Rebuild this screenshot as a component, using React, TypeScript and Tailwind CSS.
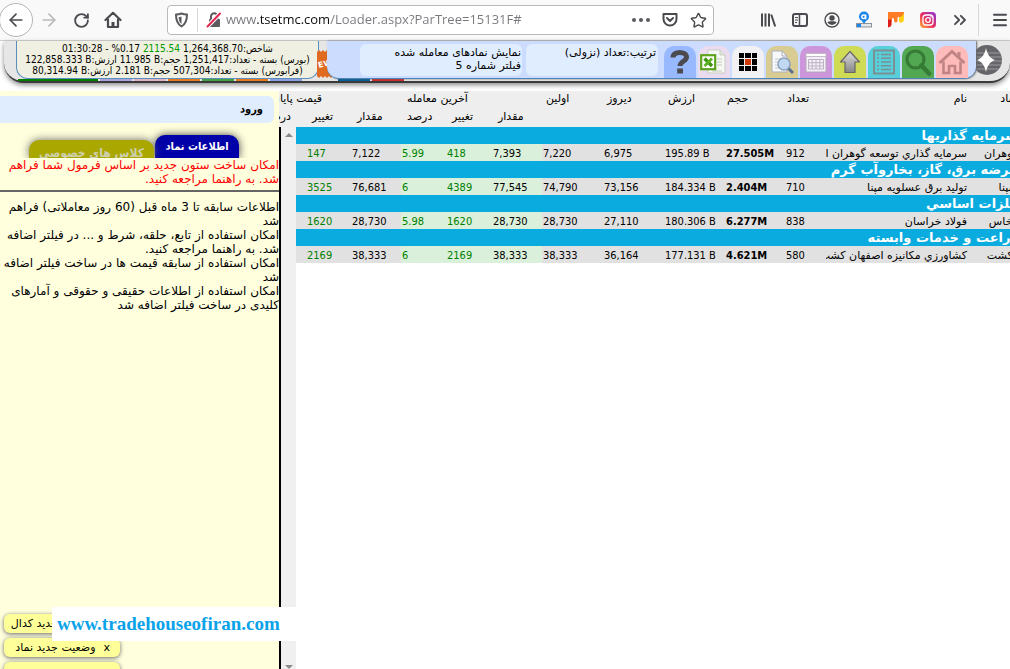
import type { ReactNode } from "react";
import { clsx } from "clsx";
import { ArrowLeft, ArrowRight, ChevronsRight, Menu, RotateCw, Star } from "lucide-react";

type Row = {
  sector: string;
  symbol: string;
  name: string;
  count: string;
  volume: string;
  value: string;
  yesterday: string;
  first: string;
  last: string;
  lastChange: string;
  lastPercent: string;
  close: string;
  closeChange: string;
};

const ROWS: Row[] = [
  {
    sector: "سرمايه گذاريها",
    symbol: "گوهران",
    name: "سرمايه گذاري توسعه گوهران اميد",
    count: "912",
    volume: "27.505M",
    value: "195.89 B",
    yesterday: "6,975",
    first: "7,220",
    last: "7,393",
    lastChange: "418",
    lastPercent: "5.99",
    close: "7,122",
    closeChange: "147",
  },
  {
    sector: "عرضه برق، گاز، بخاروآب گرم",
    symbol: "بمپنا",
    name: "توليد برق عسلويه مپنا",
    count: "710",
    volume: "2.404M",
    value: "184.334 B",
    yesterday: "73,156",
    first: "74,790",
    last: "77,545",
    lastChange: "4389",
    lastPercent: "6",
    close: "76,681",
    closeChange: "3525",
  },
  {
    sector: "فلزات اساسي",
    symbol: "فخاس",
    name: "فولاد خراسان",
    count: "838",
    volume: "6.277M",
    value: "180.306 B",
    yesterday: "27,110",
    first: "28,730",
    last: "28,730",
    lastChange: "1620",
    lastPercent: "5.98",
    close: "28,730",
    closeChange: "1620",
  },
  {
    sector: "زراعت و خدمات وابسته",
    symbol: "زكشت",
    name: "كشاورزي مكانيزه اصفهان كشت",
    count: "580",
    volume: "4.621M",
    value: "177.131 B",
    yesterday: "36,164",
    first: "38,333",
    last: "38,333",
    lastChange: "2169",
    lastPercent: "6",
    close: "38,333",
    closeChange: "2169",
  },
];

const NEWS = [
  "اطلاعات سابقه تا 3 ماه قبل (60 روز معاملاتی) فراهم شد",
  "امکان استفاده از تابع، حلقه، شرط و ... در فیلتر اضافه شد. به راهنما مراجعه کنید.",
  "امکان استفاده از سابقه قیمت ها در ساخت فیلتر اضافه شد",
  "امکان استفاده از اطلاعات حقیقی و حقوقی و آمارهای کلیدی در ساخت فیلتر اضافه شد",
];

export default function App() {
  return (
    <div className="flex h-screen flex-col overflow-hidden bg-white font-['DejaVu_Sans',sans-serif] text-[11px] text-black">
      <BrowserBar />
      <SiteHeader />
      <div className="mt-2 flex min-h-0 flex-1">
        <Sidebar />
        <Market />
      </div>
    </div>
  );
}

function BrowserBar() {
  return (
    <header className="flex h-[41px] shrink-0 items-center border-b border-[#cfcfcf] bg-[#f9f9fa] text-[#4a4a4f]">
      <nav className="-ml-px flex items-center gap-2">
        <button aria-label="Back" className="flex size-[34px] items-center justify-center rounded-full border border-[#b5b5b7] bg-white">
          <ArrowLeft size={20} />
        </button>
        <button aria-label="Forward" className="-ml-0.5 flex w-5 justify-center text-[#b9b9bb]">
          <ArrowRight size={20} />
        </button>
        <button aria-label="Reload" className="ml-1 flex w-5 justify-center">
          <RotateCw size={17} strokeWidth={2.6} />
        </button>
        <button aria-label="Home" className="ml-1 flex w-5 justify-center">
          <HomeIcon />
        </button>
      </nav>
      <div className="ml-11 flex h-[30px] min-w-0 flex-1 items-center rounded-sm border border-[#b9b9bb] bg-white pr-1.5 pl-1.5">
        <ShieldIcon />
        <span className="mx-2 h-6 w-px bg-[#d7d7db]" />
        <LockOffIcon />
        <input
          aria-label="Address"
          defaultValue="www.tsetmc.com/Loader.aspx?ParTree=15131F#"
          className="ml-1 min-w-0 flex-1 bg-[linear-gradient(90deg,#77777c_31px,#0c0c0d_31px,#0c0c0d_104px,#77777c_104px)] bg-clip-text font-['Open_Sans',sans-serif] text-[13px] text-transparent outline-none"
        />
        <div className="flex items-center gap-3">
          <button aria-label="Page actions" className="flex gap-[3px]">
            <span className="size-1 rounded-full bg-[#5a5a5f]" />
            <span className="size-1 rounded-full bg-[#5a5a5f]" />
            <span className="size-1 rounded-full bg-[#5a5a5f]" />
          </button>
          <button aria-label="Save to Pocket">
            <PocketIcon />
          </button>
          <button aria-label="Bookmark">
            <Star size={17} />
          </button>
        </div>
      </div>
      <div className="ml-[46px] flex items-center gap-4">
        <button aria-label="Library">
          <LibraryIcon />
        </button>
        <button aria-label="Sidebars">
          <SidebarIcon />
        </button>
        <button aria-label="Account">
          <AccountIcon />
        </button>
        <button aria-label="Alexa">
          <AlexaIcon />
        </button>
        <button aria-label="Mail">
          <MetaIcon />
        </button>
        <button aria-label="Instagram">
          <InstagramIcon />
        </button>
        <button aria-label="More tools">
          <ChevronsRight size={20} strokeWidth={2.2} className="-mx-0.5" />
        </button>
      </div>
      <span className="ml-2.5 h-8 w-px bg-[#d7d7db]" />
      <button aria-label="Menu" className="mr-px ml-3">
        <Menu size={18} strokeWidth={2.6} />
      </button>
    </header>
  );
}

function SiteHeader() {
  return (
    <div className="ml-1 flex shrink-0 flex-col rounded-b-[20px] border-b-2 border-[#3a3a3a] bg-[#e6e6e6] shadow-[0_2px_5px_#888]">
      <div className="flex h-[38px]">
        <div
          dir="rtl"
          className="ml-3 w-[303px] shrink-0 rounded-b-xl border-x border-b border-[#5b8dbd] bg-[#f0f0e2] pt-0.5 text-center font-['DejaVu_Sans_Condensed','DejaVu_Sans',sans-serif] text-[10px] leading-[11px] whitespace-nowrap"
        >
          <p>
            شاخص:<bdi dir="ltr">1,264,368.70</bdi> <bdi dir="ltr" className="text-[#009900]">2115.54</bdi>{" "}
            <bdi dir="ltr">%0.17</bdi> - <bdi dir="ltr">01:30:28</bdi>
          </p>
          <IndexLine market="بورس" count="1,251,417" volume="11.985 B" value="122,858.333 B" />
          <IndexLine market="فرابورس" count="507,304" volume="2.181 B" value="80,314.94 B" />
        </div>
        <span className="-mr-2 -ml-1 flex w-5 shrink-0 items-center justify-center pt-2">
          <NewBadge />
        </span>
        <div className="relative flex min-w-0 flex-1 rounded-b-xl border-b border-[#4f84b8] bg-[#ccdcff] shadow-[1px_0_2px_#666]">
          <div dir="rtl" className="flex w-full">
            <nav className="mr-0.5 flex w-[312px] shrink-0 items-end justify-end gap-0.5 pr-1.5" dir="ltr">
              <Tile label="Help" tone="bg-[#99b9ff]"><HelpGlyph /></Tile>
              <Tile label="Excel" tone="bg-[#eadcee]"><ExcelGlyph /></Tile>
              <Tile label="Grid" tone="bg-[#f1f1f4]"><GridGlyph /></Tile>
              <Tile label="Inspect" tone="bg-[#d8cc92]"><InspectGlyph /></Tile>
              <Tile label="Calendar" tone="bg-[#cd95da]"><CalendarGlyph /></Tile>
              <Tile label="Upload" tone="bg-[#cfda55]"><UpGlyph /></Tile>
              <Tile label="List" tone="bg-[#57d0d9]"><ListGlyph /></Tile>
              <Tile label="Search" tone="bg-[#52a852]"><SearchGlyph /></Tile>
              <Tile label="Home" tone="bg-[#ffbaba]"><HouseGlyph /></Tile>
            </nav>
            <p className="mt-[3px] mr-1 h-8 w-[132px] shrink-0 rounded-md bg-[#e0edff] px-0.5 pt-0.5 leading-[13px]">
              ترتیب:تعداد (نزولی)
            </p>
            <p className="mt-[3px] mr-1 h-8 w-[162px] shrink-0 rounded-md bg-[#e0edff] px-px pt-0.5 leading-[13px]">
              نمایش نمادهای معامله شده
              <br />
              فیلتر شماره 5
            </p>
          </div>
        </div>
        <span className="-ml-2 flex w-[42px] shrink-0 items-start pt-0.5">
          <LogoGlyph />
        </span>
      </div>
      <div className="flex h-0.5 gap-0.5 px-[14px]">
        <span className="w-20 bg-[#008000]" />
        <span className="w-8 bg-[#a9a4dd]" />
        <span className="w-8 bg-[#e0b4c4]" />
        <span className="w-8 bg-[#e87a1c]" />
        <span className="w-8 bg-[#45a045]" />
        <span className="w-8 bg-[#e87a1c]" />
        <span className="w-8 bg-[#8a9fe0]" />
        <span className="w-8" />
        <span className="w-8 bg-[#005f9c]" />
        <span className="w-8 bg-[#d42a2a]" />
      </div>
    </div>
  );
}

function IndexLine({ market, count, volume, value }: { market: string; count: string; volume: string; value: string }) {
  return (
    <p>
      ({market}) بسته - تعداد:<bdi dir="ltr">{count}</bdi> حجم:<bdi dir="ltr">{volume}</bdi> ارزش:<bdi dir="ltr">{value}</bdi>
    </p>
  );
}

function Tile({ label, tone, children }: { label: string; tone: string; children: ReactNode }) {
  return (
    <button aria-label={label} className={clsx("flex size-8 shrink-0 items-center justify-center rounded-t-[10px]", tone)}>
      {children}
    </button>
  );
}

function Sidebar() {
  return (
    <aside dir="rtl" className="relative flex w-[279px] shrink-0 flex-col overflow-hidden bg-[#ffffdd]">
      <a
        href="#login"
        className="mt-[5px] mr-[5px] rounded-r-md bg-[#e0edff] pr-[11px] font-['DejaVu_Sans_Condensed','DejaVu_Sans',sans-serif] leading-[27px] font-bold"
      >
        ورود
      </a>
      <div className="flex h-[35px] items-end overflow-hidden pr-10">
        <button className="h-[23px] w-[84px] shrink-0 rounded-t-[10px] bg-[#0000a8] pt-0.5 font-['DejaVu_Sans_Condensed','DejaVu_Sans',sans-serif] font-bold whitespace-nowrap text-white shadow-[0_0_8px_#444]">
          اطلاعات نماد
        </button>
        <button className="mr-px h-[18px] w-[125px] shrink-0 rounded-t-[10px] bg-[#aaa800] pt-1 font-['DejaVu_Sans_Condensed','DejaVu_Sans',sans-serif] text-[12px] leading-[18px] font-bold whitespace-nowrap text-[#cfcfb0] shadow-[0_0_8px_#666]">
          کلاس های خصوصی
        </button>
      </div>
      <p className="border-b-2 border-[#666] pb-1 text-[12px] leading-[14px] text-[#ff0000]">
        امکان ساخت ستون جدید بر اساس فرمول شما فراهم شد. به راهنما مراجعه کنید.
      </p>
      <ul className="mt-2 text-[12px] leading-[14px]">
        {NEWS.map((item) => (
          <li key={item}>{item}</li>
        ))}
      </ul>
      <div className="absolute top-[523px] left-1 flex w-[116px] flex-col gap-[5px]">
        <Toast text="اطلاعیه جدید کدال" />
        <Toast text="وضعیت جدید نماد" />
        <Toast text="وضعیت جدید نماد" tall />
      </div>
    </aside>
  );
}

function Toast({ text, tall }: { text: string; tall?: boolean }) {
  return (
    <div
      className={clsx(
        "flex shrink-0 items-center gap-2 rounded-md bg-[#ffff99] pt-0.5 pr-2.5 whitespace-nowrap shadow-[0_1px_4px_#666]",
        tall ? "h-9" : "h-[19px]",
      )}
    >
      <button aria-label="بستن">x</button>
      <span>{text}</span>
    </div>
  );
}

// Widths run right to left; the last column takes what is left of the window.
function Columns() {
  return (
    <colgroup>
      <col className="w-[57px]" />
      <col className="w-[143px]" />
      <col className="w-[41px]" />
      <col className="w-[60px]" />
      <col className="w-[61px]" />
      <col className="w-[61px]" />
      <col className="w-[61px]" />
      <col className="w-[50px]" />
      <col className="w-[46px]" />
      <col className="w-[45px]" />
      <col className="w-[50px]" />
      <col className="w-[45px]" />
      <col />
    </colgroup>
  );
}

function Market() {
  return (
    <main className="relative flex min-w-0 flex-1 flex-col">
      <div className="overflow-hidden bg-[#eee]">
        <div dir="rtl" className="-mr-4">
          <table className="w-full table-fixed">
            <Columns />
            <thead className="text-left align-top leading-[16px] whitespace-nowrap [&_th]:font-normal">
              <tr className="h-[18px]">
                <th className="pr-2 text-right">نماد</th>
                <th className="pr-0.5 text-right">نام</th>
                <th className="pl-0.5">تعداد</th>
                <th className="pl-0.5">حجم</th>
                <th className="pl-1">ارزش</th>
                <th className="pl-1">دیروز</th>
                <th className="pl-1">اولین</th>
                <th colSpan={3} className="pl-1.5">آخرین معامله</th>
                <th colSpan={3} className="overflow-hidden pr-[79px] text-right">قیمت پایانی</th>
              </tr>
              <tr className="h-[18px]">
                <th colSpan={7} />
                <th className="pl-1.5">مقدار</th>
                <th className="pl-1.5">تغییر</th>
                <th className="pl-1.5">درصد</th>
                <th className="pl-1.5">مقدار</th>
                <th className="pl-1.5">تغییر</th>
                <th className="overflow-hidden pr-[15px] text-right">درصد</th>
              </tr>
            </thead>
          </table>
        </div>
      </div>
      <div className="flex min-h-0 flex-1">
        <div className="flex w-[17px] shrink-0 flex-col items-center justify-between border-l-2 border-black bg-[#f0f0f0] pt-1.5">
          <span className="border-x-4 border-b-4 border-x-transparent border-b-[#8a8a8a]" />
          <span className="border-x-4 border-t-4 border-x-transparent border-t-[#8a8a8a]" />
        </div>
        <div className="min-w-0 flex-1 overflow-hidden">
          <div dir="rtl" className="-mr-4">
            <table className="w-full table-fixed">
              <Columns />
              {ROWS.map((row) => (
                <MarketRows key={row.symbol} row={row} />
              ))}
            </table>
          </div>
        </div>
      </div>
      <p className="absolute top-[516px] -left-[227px] w-[244px] bg-white pl-[5px] font-['Liberation_Serif',serif] text-[19px] leading-[34px] font-bold text-[#0aa2e8]">
        www.tradehouseofiran.com
      </p>
    </main>
  );
}

function MarketRows({ row }: { row: Row }) {
  return (
    <tbody className="leading-[15px] whitespace-nowrap">
      <tr className="h-[17px] bg-[#0aabde]">
        <th colSpan={13} className="pr-2 text-right text-[13px] leading-[17px] font-bold text-white">
          {row.sector}
        </th>
      </tr>
      <tr className="h-[17px] bg-[#e1e1e1]">
        <td className="pt-0.5 pr-2">{row.symbol}</td>
        <td className="overflow-hidden pt-0.5 pr-0.5">{row.name}</td>
        <Num>{row.count}</Num>
        <Num className="font-bold">{row.volume}</Num>
        <Num>{row.value}</Num>
        <Num>{row.yesterday}</Num>
        <Num>{row.first}</Num>
        <Num className="bg-[#daf0da]">{row.last}</Num>
        <Num className="bg-[#daf0da] text-[#008000]">{row.lastChange}</Num>
        <Num className="bg-[#daf0da] text-[#008000]">{row.lastPercent}</Num>
        <Num>{row.close}</Num>
        <Num className="text-[#008000]">{row.closeChange}</Num>
        <td />
      </tr>
    </tbody>
  );
}

function Num({ className, children }: { className?: string; children: ReactNode }) {
  return (
    <td dir="ltr" className={clsx("pt-0.5 pl-px text-left font-['DejaVu_Sans_Condensed','DejaVu_Sans',sans-serif]", className)}>
      {children}
    </td>
  );
}

function HomeIcon() {
  return (
    <svg width="18" height="18" viewBox="0 0 18 18" fill="none" stroke="currentColor" strokeWidth="2.2" strokeLinejoin="round" strokeLinecap="round">
      <path d="M1.500 9 9 1.800 16.500 9M4 8.500V16h10V8.500" />
      <path d="M9 15.500V11" strokeWidth="3" strokeLinecap="butt" />
    </svg>
  );
}

function ShieldIcon() {
  return (
    <svg width="15" height="16" viewBox="0 0 15 16" fill="none" stroke="#5a5a5f">
      <path d="M7.500 1.500c2 .8 3.800 1 5.500 1 0 6-1 9.500-5.500 12C3 12 2 8.500 2 2.500c1.700 0 3.500-.2 5.500-1z" strokeWidth="2" strokeLinejoin="round" />
      <path d="M7.500 4.500v7.500C5.200 10.300 4.800 8 4.700 5c1 0 1.900-.1 2.800-.5z" fill="#5a5a5f" stroke="none" />
    </svg>
  );
}

function LockOffIcon() {
  return (
    <svg width="16" height="18" viewBox="0 0 16 18" fill="none">
      <path d="M5 8V5.500a3.200 3.200 0 0 1 6.400 0V8" stroke="#5a5a5f" strokeWidth="2" />
      <rect x="3" y="8" width="11" height="8" rx="1" fill="#5a5a5f" />
      <path d="M1.500 15.500 14 2.500" stroke="#fff" strokeWidth="4" />
      <path d="M1.500 15.500 14 2.500" stroke="#e22850" strokeWidth="2" strokeLinecap="round" />
    </svg>
  );
}

function PocketIcon() {
  return (
    <svg width="16" height="16" viewBox="0 0 16 16" fill="none" stroke="currentColor" strokeWidth="2" strokeLinecap="round" strokeLinejoin="round">
      <path d="M1.500 2h13v5a6.500 6.500 0 0 1-13 0z" />
      <path d="m5 6 3 3 3-3" />
    </svg>
  );
}

function LibraryIcon() {
  return (
    <svg width="16" height="16" viewBox="0 0 16 16" fill="none" stroke="currentColor" strokeWidth="2">
      <path d="M2 1.500v13M5.500 1.500v13M9 1.500v13M11.200 2.500l4 12" />
    </svg>
  );
}

function SidebarIcon() {
  return (
    <svg width="16" height="16" viewBox="0 0 16 16" fill="none" stroke="currentColor">
      <rect x="1" y="2" width="14" height="12" rx="2" strokeWidth="2" />
      <path d="M7.500 2v12" strokeWidth="1.500" />
      <path d="M3 5.500h3M3 8h3M3 10.500h2" />
    </svg>
  );
}

function AccountIcon() {
  return (
    <svg width="16" height="16" viewBox="0 0 16 16" fill="none">
      <circle cx="8" cy="8" r="7" stroke="currentColor" strokeWidth="1.400" />
      <circle cx="8" cy="6" r="2.700" fill="currentColor" />
      <path d="M3.300 10.300c1-.9 2.300-1 4.700-1s3.700.1 4.700 1A5.300 5.300 0 0 1 8 13a5.300 5.300 0 0 1-4.700-2.700z" fill="currentColor" />
    </svg>
  );
}

function AlexaIcon() {
  return (
    <svg width="16" height="18" viewBox="0 0 16 18">
      <circle cx="8" cy="5.500" r="5" fill="#1a84e8" />
      <circle cx="7.600" cy="5.800" r="1.800" fill="none" stroke="#fff" strokeWidth="1.400" />
      <path d="M9.700 3.500v4.800" stroke="#fff" strokeWidth="1.400" />
      <path d="m6 10 2 3 2-3z" fill="#1a84e8" />
      <rect x=".5" y="12.500" width="15" height="3.500" fill="#e4e6ea" stroke="#8c9098" />
      <rect x="1" y="13" width="4" height="3" fill="#1a84e8" />
    </svg>
  );
}

function MetaIcon() {
  return (
    <svg width="16" height="16" viewBox="0 0 16 16">
      <path d="M0 0h16v7H11.500V5.500q-1-1.500-2 0V9q-1.500 3-3.500 0V7Q5 5 3.800 7v3L0 12z" fill="#ff7c26" />
      <path d="M0 7.500h3.500V13q-.5 2-3.500 2.500z" fill="#dd1c1c" />
      <path d="M16 1v7.500Q14 12 11 10V5.500Q14 5 16 1z" fill="#ffd21c" />
    </svg>
  );
}

function InstagramIcon() {
  return (
    <svg width="16" height="16" viewBox="0 0 16 16" fill="none">
      <defs>
        <linearGradient id="insta" x1="0" y1="1" x2="1" y2="0">
          <stop offset="0" stopColor="#fdb53a" />
          <stop offset=".45" stopColor="#ec2f5b" />
          <stop offset="1" stopColor="#8a35d8" />
        </linearGradient>
      </defs>
      <rect width="16" height="16" rx="4" fill="url(#insta)" />
      <rect x="3" y="3" width="10" height="10" rx="3" stroke="#fff" strokeWidth="1.300" />
      <circle cx="8" cy="8" r="2.300" stroke="#fff" strokeWidth="1.300" />
      <circle cx="11" cy="5" r=".8" fill="#fff" />
    </svg>
  );
}

function NewBadge() {
  return (
    <svg width="20" height="28" viewBox="0 0 20 28">
      <path d="M2 2l2-2 2 2 2-2 2 2 2-2 2 2 2-2 2 2v24l-2 2-2-2-2 2-2-2-2 2-2-2-2 2-2-2z" fill="#e06a20" />
      <text x="3" y="17" fontSize="8" fontWeight="bold" fill="#fff" transform="rotate(-14 8 14)">EW</text>
    </svg>
  );
}

function HelpGlyph() {
  return (
    <svg width="22" height="26" viewBox="0 0 22 26" fill="none" stroke="#4b4b4f" strokeWidth="5">
      <path d="M4 8.500C4 1.500 17.500 2 17.500 8c0 4.500-6.500 4-6.500 9" />
      <path d="M8.200 22H14" strokeWidth="5" />
    </svg>
  );
}

function ExcelGlyph() {
  return (
    <svg width="28" height="26" viewBox="0 0 28 26" fill="none">
      <path d="M8 1h12l5 5v18H8z" fill="#f6f8f4" stroke="#c6ccc0" />
      <path d="M20 1v5h5" fill="#e0e6da" stroke="#c6ccc0" />
      <path d="M17 10h5M17 13h5M17 16h5M12 22h10" stroke="#c0c8bc" />
      <rect x="1.200" y="6.200" width="14" height="14" fill="#fff" stroke="#5fa21e" strokeWidth="2.200" />
      <path d="m4.500 9.500 7.500 7.500" stroke="#3f9410" strokeWidth="3.400" />
      <path d="m12 9.500-7.500 7.500" stroke="#5fb322" strokeWidth="2.800" />
    </svg>
  );
}

function GridGlyph() {
  return (
    <svg width="18" height="18" viewBox="0 0 18 18">
      <path d="M0 0h5v5H0zM6 0h6v5H6zM13 0h5v5h-5zM0 6h5v6H0zM13 6h5v6h-5zM0 13h5v5H0zM6 13h6v5H6zM13 13h5v5h-5z" />
      <path d="M6 6h6v6H6z" fill="#d23a08" />
    </svg>
  );
}

function InspectGlyph() {
  return (
    <svg width="26" height="26" viewBox="0 0 26 26" fill="none">
      <path d="M3 2h10l5 5v16H3z" fill="#f7f8fa" stroke="#a9b0b8" />
      <path d="M13 2v5h5" stroke="#a9b0b8" />
      <path d="M6 10h8M6 13h4M6 16h4M6 19h6" stroke="#c2c8ce" />
      <path d="m19 19 5 5" stroke="#5c6f92" strokeWidth="3" />
      <circle cx="15" cy="15" r="6" fill="#c0d8f2" stroke="#8fa2bd" strokeWidth="1.500" />
    </svg>
  );
}

function CalendarGlyph() {
  return (
    <svg width="22" height="22" viewBox="0 0 22 22" fill="none">
      <rect x="1" y="2" width="20" height="19" fill="#f4f0f6" stroke="#b5a5bc" />
      <path d="M1 2.500h20v3H1z" fill="#fff" stroke="#c8b8d0" />
      <path d="M3.500 8.500h15v9.500h-15zM3.500 11.700h15M3.500 15h15M7.200 8.500V18M11 8.500V18M14.800 8.500V18" stroke="#bdb2c4" />
    </svg>
  );
}

function UpGlyph() {
  return (
    <svg width="22" height="24" viewBox="0 0 22 24">
      <defs>
        <linearGradient id="up" x1="0" y1="0" x2="0" y2="1">
          <stop offset="0" stopColor="#ddd" />
          <stop offset="1" stopColor="#868686" />
        </linearGradient>
      </defs>
      <path d="M11 1.500 20.500 12H16v10.500H6V12H1.500z" fill="url(#up)" stroke="#666" strokeWidth="1.200" strokeLinejoin="round" />
    </svg>
  );
}

function ListGlyph() {
  return (
    <svg width="24" height="26" viewBox="0 0 24 26" fill="none" stroke="#7b8f95" strokeWidth="1.500">
      <rect x="2" y="1.500" width="20" height="23" strokeWidth="2" />
      <path d="M5 5.500h2M9 5.500h10M5 9.200h2M9 9.200h10M5 13h2M9 13h10M5 16.800h2M9 16.800h10M5 20.500h2M9 20.500h10" />
    </svg>
  );
}

function SearchGlyph() {
  return (
    <svg width="28" height="28" viewBox="0 0 28 28" fill="none" stroke="#357a35">
      <circle cx="11.500" cy="11.500" r="8.500" strokeWidth="3.200" />
      <path d="m17.500 17.500 7.500 8" strokeWidth="4.500" strokeLinecap="round" />
    </svg>
  );
}

function HouseGlyph() {
  return (
    <svg width="28" height="26" viewBox="0 0 28 26" fill="none" stroke="#c08484" strokeWidth="2.600">
      <path d="M1.500 14 14 2.500 26.500 14" strokeWidth="3" />
      <path d="M5.500 12.500V24H11v-7h6v7h5.500V12.500" />
      <path d="M21 8V3" strokeWidth="3" />
    </svg>
  );
}

function LogoGlyph() {
  return (
    <svg width="34" height="34" viewBox="0 0 34 34">
      <circle cx="19" cy="17" r="15" fill="#66666a" />
      <path d="M6 10h26M4 14h30M4 18h30M5 22h28M8 26h22" stroke="#9a9a9f" />
      <path d="M18 5c1.500 7 4 10 9 12-5 2-7.500 5-9 12-1.500-7-4-10-9-12 5-2 7.500-5 9-12z" fill="#fff" />
    </svg>
  );
}
